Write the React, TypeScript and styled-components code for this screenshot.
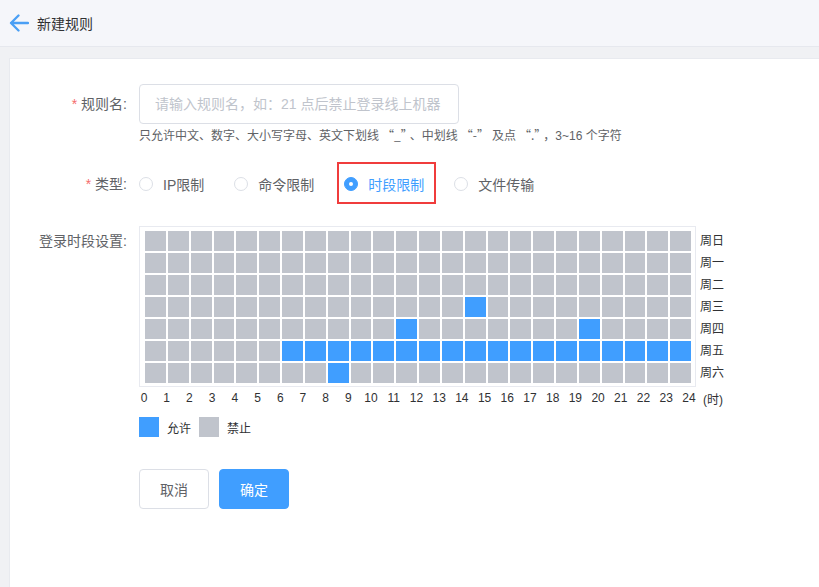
import React from 'react';
import styled, { createGlobalStyle } from 'styled-components';

const GlobalStyle = createGlobalStyle`
  html, body {
    margin: 0;
    padding: 0;
    background: #f0f1f4;
    font-family: 'Liberation Sans', 'Noto Sans CJK SC', sans-serif;
    color: #303133;
  }
`;

const BLUE = '#409eff';
const GRAY = '#c0c4cc';

const Page = styled.div`
  width: 819px;
  height: 587px;
  overflow: hidden;
  display: flex;
  flex-direction: column;
`;

const Header = styled.div`
  height: 46px;
  flex-shrink: 0;
  display: flex;
  align-items: center;
  padding-left: 9px;
  background: #f5f6fa;
  border-bottom: 1px solid #e6e8ee;
`;

const BackIcon = styled.svg`
  width: 20px;
  height: 18px;
  margin-right: 8px;
  margin-top: -1px;
`;

const Title = styled.span`
  font-size: 14px;
  color: #303133;
`;

const Card = styled.div`
  flex: 1;
  margin: 11px 0 0 9px;
  background: #fff;
  border-top: 1px solid #e8eaef;
  border-left: 1px solid #e8eaef;
  padding-top: 25px;
`;

const FormItem = styled.div<{ $top?: number }>`
  display: flex;
  align-items: flex-start;
  margin-top: ${({ $top }) => ($top ? `${$top}px` : '0')};
`;

const Label = styled.div<{ $lh?: number; $pt?: number }>`
  width: 117px;
  padding-right: 12px;
  padding-top: ${({ $pt }) => ($pt ? `${$pt}px` : '0')};
  text-align: right;
  font-size: 14px;
  line-height: ${({ $lh }) => ($lh ? `${$lh}px` : '40px')};
  color: #606266;
  flex-shrink: 0;
`;

const Star = styled.span`
  color: #f56c6c;
  margin-right: 4px;
`;

const Content = styled.div`
  display: flex;
  flex-direction: column;
`;

const Input = styled.input`
  width: 320px;
  height: 40px;
  box-sizing: border-box;
  border: 1px solid #dcdfe6;
  border-radius: 4px;
  padding: 0 15px;
  font-size: 14px;
  font-family: inherit;
  color: #606266;
  outline: none;
  &::placeholder {
    color: #c0c4cc;
  }
`;

const Hint = styled.div`
  margin-top: 3px;
  font-size: 12px;
  line-height: 16px;
  color: #606266;
  white-space: nowrap;
`;

const Quote = styled.span`
  font-family: 'Noto Sans CJK SC', sans-serif;
  margin: 0 3px;
`;

const RadioGroup = styled.div`
  display: flex;
  align-items: center;
  height: 40px;
`;

const RadioItem = styled.label<{ $checked?: boolean; $marked?: boolean }>`
  position: relative;
  display: flex;
  align-items: center;
  height: 20px;
  margin-right: 30px;
  font-size: 14px;
  color: ${({ $checked }) => ($checked ? BLUE : '#606266')};
  &::after {
    content: '';
    display: ${({ $marked }) => ($marked ? 'block' : 'none')};
    position: absolute;
    left: -7px;
    right: -12px;
    top: -12px;
    bottom: -10px;
    border: 2px solid #f03c3c;
  }
`;

const RadioDot = styled.span<{ $checked?: boolean }>`
  width: 14px;
  height: 14px;
  box-sizing: border-box;
  border-radius: 50%;
  border: 1px solid ${({ $checked }) => ($checked ? BLUE : '#dcdfe6')};
  background: ${({ $checked }) => ($checked ? BLUE : '#fff')};
  margin-right: 10px;
  display: flex;
  align-items: center;
  justify-content: center;
  &::after {
    content: '';
    width: 4px;
    height: 4px;
    border-radius: 50%;
    background: #fff;
    display: ${({ $checked }) => ($checked ? 'block' : 'none')};
  }
`;

const ScheduleWrap = styled.div`
  display: flex;
  align-items: flex-start;
`;

const GridBox = styled.div`
  border: 1px solid #e8eaf0;
  padding: 4px 4px 3px 5px;
`;

const CellGrid = styled.div`
  width: 546px;
  display: grid;
  grid-template-columns: repeat(24, 1fr);
  grid-auto-rows: 20px;
  gap: 2px;
`;

const Cell = styled.div<{ $on?: boolean }>`
  background: ${({ $on }) => ($on ? BLUE : GRAY)};
`;

const DayCol = styled.div`
  display: flex;
  flex-direction: column;
  gap: 2px;
  padding-top: 5px;
  margin-left: 4px;
`;

const DayLabel = styled.div`
  height: 20px;
  line-height: 20px;
  font-size: 12px;
  color: #303133;
`;

const HourRow = styled.div`
  display: flex;
  align-items: center;
  margin-top: 3px;
  padding-left: 5px;
  height: 16px;
`;

const HourTicks = styled.div`
  width: 545px;
  display: flex;
  justify-content: space-between;
`;

const Tick = styled.span`
  width: 0;
  display: flex;
  justify-content: center;
  white-space: nowrap;
  font-size: 12px;
  line-height: 16px;
  color: #303133;
`;

const Unit = styled.span`
  margin-left: 14px;
  font-size: 12px;
  color: #303133;
`;

const Legend = styled.div`
  display: flex;
  align-items: center;
  margin-top: 11px;
`;

const Swatch = styled.span<{ $on?: boolean }>`
  width: 20px;
  height: 20px;
  background: ${({ $on }) => ($on ? BLUE : GRAY)};
  margin-right: 8px;
`;

const LegendText = styled.span`
  font-size: 12px;
  color: #303133;
  margin-right: 8px;
`;

const Actions = styled.div`
  display: flex;
  gap: 10px;
  margin-top: 32px;
  padding-left: 129px;
`;

const Button = styled.button<{ $primary?: boolean }>`
  width: 70px;
  height: 40px;
  border-radius: 4px;
  font-size: 14px;
  font-family: inherit;
  cursor: pointer;
  border: 1px solid ${({ $primary }) => ($primary ? BLUE : '#dcdfe6')};
  background: ${({ $primary }) => ($primary ? BLUE : '#fff')};
  color: ${({ $primary }) => ($primary ? '#fff' : '#606266')};
`;

const days = ['周日', '周一', '周二', '周三', '周四', '周五', '周六'];

const allowed: Record<number, number[]> = {
  3: [14],
  4: [11, 19],
  5: Array.from({ length: 18 }, (_, i) => i + 6),
  6: [8],
};

const types = ['IP限制', '命令限制', '时段限制', '文件传输'];

export default function App() {
  return (
    <Page>
      <GlobalStyle />
      <Header>
        <BackIcon viewBox="0 0 20 18" fill="none" stroke="#4a9ff5" strokeWidth="2.3" strokeLinecap="round" strokeLinejoin="round">
          <path d="M19 9H2M9.5 1.5L2 9l7.5 7.5" />
        </BackIcon>
        <Title>新建规则</Title>
      </Header>
      <Card>
        <FormItem>
          <Label><Star>*</Star>规则名:</Label>
          <Content>
            <Input placeholder="请输入规则名，如：21 点后禁止登录线上机器" />
            <Hint>
              只允许中文、数字、大小写字母、英文下划线<Quote>“_”</Quote>、中划线<Quote>“-”</Quote>及点<Quote>“.”</Quote>，3~16 个字符
            </Hint>
          </Content>
        </FormItem>
        <FormItem $top={20}>
          <Label><Star>*</Star>类型:</Label>
          <RadioGroup>
            {types.map((t, i) => (
              <RadioItem key={t} $checked={i === 2} $marked={i === 2}>
                <RadioDot $checked={i === 2} />
                {t}
              </RadioItem>
            ))}
          </RadioGroup>
        </FormItem>
        <FormItem $top={22}>
          <Label $lh={20} $pt={5}>登录时段设置:</Label>
          <Content>
            <ScheduleWrap>
              <GridBox>
                <CellGrid>
                  {days.map((_, r) =>
                    Array.from({ length: 24 }, (_, c) => (
                      <Cell key={`${r}-${c}`} $on={(allowed[r] || []).includes(c)} />
                    ))
                  )}
                </CellGrid>
              </GridBox>
              <DayCol>
                {days.map((d) => (
                  <DayLabel key={d}>{d}</DayLabel>
                ))}
              </DayCol>
            </ScheduleWrap>
            <HourRow>
              <HourTicks>
                {Array.from({ length: 25 }, (_, i) => (
                  <Tick key={i}>{i}</Tick>
                ))}
              </HourTicks>
              <Unit>(时)</Unit>
            </HourRow>
            <Legend>
              <Swatch $on />
              <LegendText>允许</LegendText>
              <Swatch />
              <LegendText>禁止</LegendText>
            </Legend>
          </Content>
        </FormItem>
        <Actions>
          <Button>取消</Button>
          <Button $primary>确定</Button>
        </Actions>
      </Card>
    </Page>
  );
}
